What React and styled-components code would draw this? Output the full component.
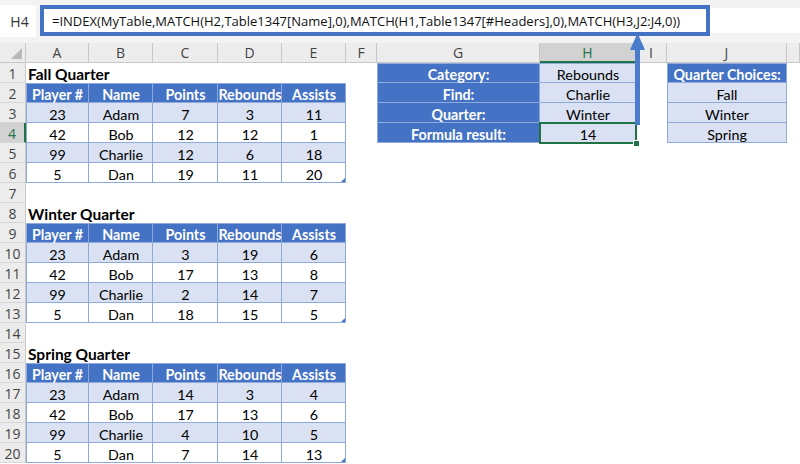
import React from 'react';
import styled, { createGlobalStyle, css } from 'styled-components';

const COL_WIDTHS = [63, 64, 65, 64, 64, 31, 163, 96, 31, 120];
const LETTERS = ['A', 'B', 'C', 'D', 'E', 'F', 'G', 'H', 'I', 'J', ''];
const TEMPLATE = `26px ${COL_WIDTHS.map((w) => `${w}px`).join(' ')} 1fr`;
const ACTIVE_COL = 7;
const ACTIVE_ROW = 4;

const BLUE = '#4472c4';
const BAND = '#d9e1f2';
const LINE = '#8eaadb';
const GREEN = '#217346';

const FORMULA =
  '=INDEX(MyTable,MATCH(H2,Table1347[Name],0),MATCH(H1,Table1347[#Headers],0),MATCH(H3,J2:J4,0))';

/* ---------- data ---------- */
const HEAD = ['Player #', 'Name', 'Points', 'Rebounds', 'Assists'];
const QUARTERS = [
  { title: 'Fall Quarter', start: 1, data: [[23, 'Adam', 7, 3, 11], [42, 'Bob', 12, 12, 1], [99, 'Charlie', 12, 6, 18], [5, 'Dan', 19, 11, 20]] },
  { title: 'Winter Quarter', start: 8, data: [[23, 'Adam', 3, 19, 6], [42, 'Bob', 17, 13, 8], [99, 'Charlie', 2, 14, 7], [5, 'Dan', 18, 15, 5]] },
  { title: 'Spring Quarter', start: 15, data: [[23, 'Adam', 14, 3, 4], [42, 'Bob', 17, 13, 6], [99, 'Charlie', 4, 10, 5], [5, 'Dan', 7, 14, 13]] },
];
const LOOKUP = [['Category:', 'Rebounds'], ['Find:', 'Charlie'], ['Quarter:', 'Winter'], ['Formula result:', '14']];
const CHOICES = ['Quarter Choices:', 'Fall', 'Winter', 'Spring'];

const buildSheet = () => {
  const sheet = Array.from({ length: 20 }, () => Array(11).fill(null));
  const put = (r, c, cell) => { sheet[r - 1][c] = cell; };
  QUARTERS.forEach(({ title, start, data }) => {
    put(start, 0, { text: title, kind: 'title' });
    HEAD.forEach((h, i) => put(start + 1, i, { text: h, kind: 'head', left: i === 0, top: true }));
    data.forEach((row, ri) =>
      row.forEach((v, i) =>
        put(start + 2 + ri, i, {
          text: v,
          kind: ri % 2 === 0 ? 'band' : 'plain',
          left: i === 0,
          handle: ri === 3 && i === 4,
        })
      )
    );
  });
  LOOKUP.forEach(([label, value], i) => {
    put(i + 1, 6, { text: label, kind: 'head', left: true, top: i === 0 });
    put(i + 1, 7, { text: value, kind: 'band', top: i === 0, selected: i === 3 });
  });
  CHOICES.forEach((t, i) => put(i + 1, 9, { text: t, kind: i === 0 ? 'head' : 'band', left: true, top: i === 0 }));
  return sheet;
};
const SHEET = buildSheet();

/* ---------- styles ---------- */
const GlobalStyle = createGlobalStyle`
  html, body { margin: 0; padding: 0; background: #fff; }
  body { font-family: Lato, "Liberation Sans", sans-serif; overflow: hidden; }
  #root { width: 800px; height: 464px; }
`;

const Window = styled.div`
  position: relative;
  width: 800px;
  height: 464px;
  overflow: hidden;
  display: flex;
  flex-direction: column;
  background: #fff;
`;

const TopArea = styled.div`
  flex: none;
  height: 43px;
  box-sizing: border-box;
  padding-top: 5px;
  background: #f3f3f3;
  display: flex;
  align-items: flex-start;
  gap: 4px;
`;

const NameBox = styled.div`
  width: 36px;
  height: 32px;
  box-sizing: border-box;
  padding-left: 3px;
  background: #fff;
  display: flex;
  align-items: center;
  justify-content: center;
  font-family: "Open Sans", sans-serif;
  font-size: 14px;
  color: #333;
`;

const FormulaField = styled.div`
  flex: 1;
  height: 25px;
  margin-top: 3px;
  background: #fff;
  display: flex;
  align-items: center;
`;

const FormulaHighlight = styled.div`
  width: 670px;
  height: 31px;
  flex: none;
  box-sizing: border-box;
  border: 4px solid ${BLUE};
  padding-left: 8px;
  display: flex;
  align-items: center;
  font-family: "Open Sans", sans-serif;
  font-size: 13px;
  color: #111;
  white-space: nowrap;
  overflow: hidden;
`;

const Sheet = styled.div`
  display: grid;
  grid-template-columns: ${TEMPLATE};
  grid-auto-rows: 20px;
`;

const headerText = css`
  font-family: "Open Sans", sans-serif;
  font-size: 14px;
  color: #444;
`;

const Corner = styled.div`
  position: relative;
  box-sizing: border-box;
  background: #ececec;
  border-right: 1px solid #c8c8c8;
  border-bottom: 1px solid #c8c8c8;
  &::after {
    content: '';
    position: absolute;
    right: 3px;
    bottom: 3px;
    width: 11px;
    height: 11px;
    background: #b8b8b8;
    clip-path: polygon(100% 0, 100% 100%, 0 100%);
  }
`;

const ColHead = styled.div`
  ${headerText}
  box-sizing: border-box;
  display: flex;
  align-items: center;
  justify-content: center;
  background: ${({ $active }) => ($active ? '#d2d2d2' : '#ececec')};
  color: ${({ $active }) => ($active ? GREEN : '#444')};
  border-right: 1px solid #c8c8c8;
  border-bottom: ${({ $active }) => ($active ? `2px solid ${GREEN}` : '1px solid #c8c8c8')};
`;

const RowHead = styled.div`
  ${headerText}
  box-sizing: border-box;
  display: flex;
  align-items: center;
  justify-content: center;
  padding-top: 1px;
  background: ${({ $active }) => ($active ? '#d2d2d2' : '#ececec')};
  color: ${({ $active }) => ($active ? GREEN : '#444')};
  border-bottom: 1px solid #d6d6d6;
  border-right: ${({ $active }) => ($active ? `2px solid ${GREEN}` : '1px solid #c8c8c8')};
`;

const tableShadow = ({ $left, $top }) => {
  const s = [`inset -1px -1px 0 ${LINE}`];
  if ($left) s.push(`inset 1px 0 0 ${LINE}`);
  if ($top) s.push(`inset 0 1px 0 ${LINE}`);
  return `box-shadow: ${s.join(', ')};`;
};

const KIND = {
  title: css`
    justify-content: flex-start;
    padding-left: 2px;
    padding-top: 1px;
    font-size: 15.5px;
    font-weight: 700;
    overflow: visible;
  `,
  head: css`
    background: ${BLUE};
    color: #fff;
    font-weight: 700;
    ${tableShadow}
  `,
  band: css`
    background: ${BAND};
    ${tableShadow}
  `,
  plain: css`
    background: #fff;
    ${tableShadow}
  `,
};

const Cell = styled.div`
  position: relative;
  box-sizing: border-box;
  display: flex;
  align-items: center;
  justify-content: center;
  padding-top: 2px;
  white-space: nowrap;
  font-size: 14.3px;
  color: #000;
  ${({ $kind }) => $kind && KIND[$kind]}
  ${({ $selected }) =>
    $selected &&
    css`
      z-index: 2;
      outline: 2px solid ${GREEN};
      outline-offset: -1px;
      &::after {
        content: '';
        position: absolute;
        right: -4px;
        bottom: -4px;
        width: 5px;
        height: 5px;
        background: ${GREEN};
        border: 1px solid #fff;
      }
    `}
  ${({ $handle }) =>
    $handle &&
    css`
      &::after {
        content: '';
        position: absolute;
        right: 1px;
        bottom: 1px;
        width: 4px;
        height: 4px;
        background: ${BLUE};
        clip-path: polygon(100% 0, 100% 100%, 0 100%);
      }
    `}
`;

const ArrowLayer = styled.svg`
  position: absolute;
  left: 625px;
  top: 30px;
  z-index: 5;
  pointer-events: none;
`;

const CalloutArrow = () => (
  <ArrowLayer width="25" height="100" viewBox="0 0 25 100">
    <polygon points="5,20 20,20 12.5,3" fill="#4b7bcd" />
    <rect x="10" y="19" width="5" height="76" fill="#4b7bcd" />
  </ArrowLayer>
);

export default function App() {
  return (
    <>
      <GlobalStyle />
      <Window>
        <TopArea>
          <NameBox>H4</NameBox>
          <FormulaField>
            <FormulaHighlight>{FORMULA}</FormulaHighlight>
          </FormulaField>
        </TopArea>
        <Sheet>
          <Corner />
          {LETTERS.map((l, i) => (
            <ColHead key={`c${i}`} $active={i === ACTIVE_COL}>
              {l}
            </ColHead>
          ))}
          {SHEET.map((row, r) => (
            <React.Fragment key={`r${r}`}>
              <RowHead $active={r + 1 === ACTIVE_ROW}>{r + 1}</RowHead>
              {row.map((cell, c) => (
                <Cell
                  key={`${r}-${c}`}
                  $kind={cell?.kind}
                  $left={cell?.left}
                  $top={cell?.top}
                  $selected={cell?.selected}
                  $handle={cell?.handle}
                >
                  {cell?.text}
                </Cell>
              ))}
            </React.Fragment>
          ))}
        </Sheet>
        <CalloutArrow />
      </Window>
    </>
  );
}
